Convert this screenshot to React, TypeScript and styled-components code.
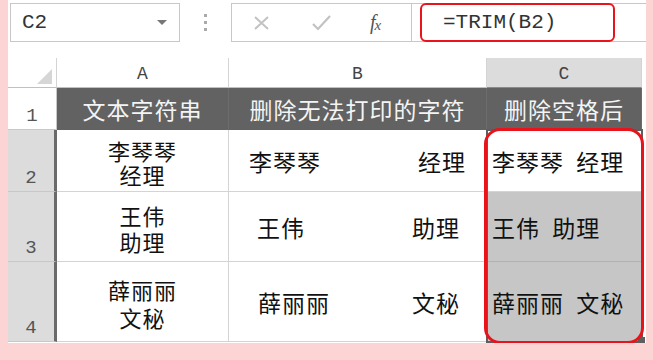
import styled, { createGlobalStyle } from 'styled-components'

const GlobalStyle = createGlobalStyle`
  html, body {
    margin: 0;
    padding: 0;
    background: #fdd4d4;
  }
  body {
    font-family: "Noto Sans CJK SC", "Noto Sans", sans-serif;
  }
`

const Frame = styled.div`
  position: relative;
  margin-left: 8px;
  width: 638px;
  height: 343px;
  background: #ffffff;
`

const Toolbar = styled.div`
  display: flex;
  align-items: flex-start;
  height: 58px;
  padding-top: 3px;
  padding-left: 2px;
  box-sizing: border-box;
`

const NameBox = styled.div`
  position: relative;
  width: 170px;
  height: 39px;
  box-sizing: border-box;
  border: 1px solid #c8c8c8;
  display: flex;
  align-items: center;
  padding-left: 11px;
  font-family: "Liberation Mono", monospace;
  font-size: 21px;
  color: #333;
`

const Caret = styled.span`
  position: absolute;
  right: 12px;
  top: 16px;
  width: 0;
  height: 0;
  border-left: 5px solid transparent;
  border-right: 5px solid transparent;
  border-top: 5px solid #777;
`

const Dots = styled.div`
  width: 51px;
  height: 39px;
  display: flex;
  flex-direction: column;
  align-items: center;
  justify-content: center;
  gap: 4px;
  span {
    width: 3px;
    height: 3px;
    background: #aaa;
  }
`

const FxGroup = styled.div`
  width: 181px;
  height: 39px;
  box-sizing: border-box;
  border: 1px solid #c8c8c8;
  display: flex;
  align-items: center;
  padding-left: 21px;
`

const IconSlot = styled.div<{ $w: number }>`
  width: ${(p) => p.$w}px;
  display: flex;
  align-items: center;
`

const Fx = styled.span`
  font-family: "Liberation Serif", serif;
  font-style: italic;
  font-size: 20px;
  color: #555;
  letter-spacing: -1px;
  sub {
    font-size: 15px;
    vertical-align: -1px;
  }
`

const FormulaInput = styled.div`
  position: relative;
  flex: 1;
  height: 39px;
  box-sizing: border-box;
  border-top: 1px solid #c8c8c8;
  border-bottom: 1px solid #c8c8c8;
  display: flex;
  align-items: center;
  padding-left: 31px;
  font-family: "Liberation Mono", monospace;
  font-size: 21px;
  color: #333;
`

const RedBox = styled.div`
  position: absolute;
  left: 8px;
  top: -1px;
  width: 195px;
  height: 39px;
  box-sizing: border-box;
  border: 2px solid #e8131b;
  border-radius: 6px;
`

const Sheet = styled.div`
  display: grid;
  grid-template-columns: 49px 172px 258px 155px 4px;
  grid-template-rows: 30px 42px 62px 70px 80px;
`

const Corner = styled.div`
  position: relative;
  border-right: 1px solid #d4d4d4;
  border-bottom: 1px solid #c0c0c0;
  &::after {
    content: '';
    position: absolute;
    right: 4px;
    bottom: 3px;
    width: 0;
    height: 0;
    border-left: 15px solid transparent;
    border-bottom: 15px solid #d6d6d6;
  }
`

const ColHead = styled.div<{ $selected?: boolean }>`
  display: flex;
  align-items: center;
  justify-content: center;
  font-family: "Liberation Mono", monospace;
  font-size: 18px;
  color: #444;
  background: ${(p) => (p.$selected ? '#dcdcdc' : '#ffffff')};
  border-right: 1px solid #d4d4d4;
  border-bottom: 1px solid ${(p) => (p.$selected ? '#8a8a8a' : '#c0c0c0')};
  padding-top: 2px;
  box-sizing: border-box;
`

const RowHead = styled.div<{ $selected?: boolean }>`
  display: flex;
  align-items: flex-end;
  justify-content: center;
  padding-bottom: 2px;
  box-sizing: border-box;
  font-family: "Liberation Mono", monospace;
  font-size: 19px;
  color: #555;
  background: ${(p) => (p.$selected ? '#dcdcdc' : '#ffffff')};
  border-bottom: 1px solid #c8c8c8;
  border-right: ${(p) => (p.$selected ? '3px solid #6a6a6a' : '1px solid #c8c8c8')};
`

const TitleCell = styled.div`
  display: flex;
  align-items: center;
  justify-content: center;
  background: #626262;
  color: #f4f4f4;
  font-size: 23px;
  letter-spacing: 1px;
  border-right: 1px solid #6c6c6c;
`

const Spacer = styled.div``

const StackCell = styled.div<{ $lh: number }>`
  display: flex;
  align-items: center;
  justify-content: center;
  text-align: center;
  white-space: pre-line;
  font-size: 22px;
  line-height: ${(p) => p.$lh}px;
  letter-spacing: 1px;
  color: #111;
  border-right: 1px solid #d4d4d4;
  border-bottom: 1px solid #d4d4d4;
  padding-top: 3px;
  box-sizing: border-box;
`

const SplitCell = styled.div<{ $left: number; $right: number }>`
  display: flex;
  align-items: center;
  justify-content: space-between;
  padding: 0 ${(p) => p.$right}px 0 ${(p) => p.$left}px;
  font-size: 23px;
  letter-spacing: 1px;
  color: #111;
  border-right: 1px solid #d4d4d4;
  border-bottom: 1px solid #d4d4d4;
  box-sizing: border-box;
`

const ResultCell = styled.div<{ $filled?: boolean }>`
  display: flex;
  align-items: center;
  padding-left: 5px;
  font-size: 23px;
  letter-spacing: 1px;
  color: #111;
  white-space: pre;
  background: ${(p) => (p.$filled ? '#c6c6c6' : '#ffffff')};
  border-bottom: 1px solid ${(p) => (p.$filled ? '#b2b2b2' : '#d4d4d4')};
  box-sizing: border-box;
`

const Selection = styled.div`
  position: absolute;
  left: 478px;
  top: 129px;
  width: 157px;
  height: 214px;
  box-sizing: border-box;
  border: 2px solid #5e5e5e;
  pointer-events: none;
`

const Handle = styled.div`
  position: absolute;
  left: 630px;
  top: 337px;
  width: 7px;
  height: 7px;
  background: #5e5e5e;
`

const RedRing = styled.div`
  position: absolute;
  left: 476px;
  top: 128px;
  width: 160px;
  height: 216px;
  box-sizing: border-box;
  border: 3px solid #e8131b;
  border-radius: 16px;
  pointer-events: none;
`

const rows = [
  { n: '2', name: '李琴琴', job: '经理', lh: 24, left: 20, right: 20, result: '李琴琴  经理', filled: false },
  { n: '3', name: '王伟', job: '助理', lh: 26, left: 28, right: 26, result: '王伟  助理', filled: true },
  { n: '4', name: '薛丽丽', job: '文秘', lh: 28, left: 29, right: 26, result: '薛丽丽  文秘', filled: true },
]

export default function App() {
  return (
    <>
      <GlobalStyle />
      <Frame>
        <Toolbar>
          <NameBox>
            C2
            <Caret />
          </NameBox>
          <Dots>
            <span />
            <span />
            <span />
          </Dots>
          <FxGroup>
            <IconSlot $w={59}>
              <svg width="17" height="14" viewBox="0 0 17 14">
                <path d="M2 1 L15 13 M15 1 L2 13" stroke="#c2c2c2" strokeWidth="2" fill="none" />
              </svg>
            </IconSlot>
            <IconSlot $w={58}>
              <svg width="19" height="16" viewBox="0 0 19 16">
                <path d="M1 9 L6 14 L18 1" stroke="#c2c2c2" strokeWidth="2.2" fill="none" />
              </svg>
            </IconSlot>
            <IconSlot $w={30}>
              <Fx>
                f<sub>x</sub>
              </Fx>
            </IconSlot>
          </FxGroup>
          <FormulaInput>
            =TRIM(B2)
            <RedBox />
          </FormulaInput>
        </Toolbar>
        <Sheet>
          <Corner />
          <ColHead>A</ColHead>
          <ColHead>B</ColHead>
          <ColHead $selected>C</ColHead>
          <Spacer />

          <RowHead>1</RowHead>
          <TitleCell>文本字符串</TitleCell>
          <TitleCell>删除无法打印的字符</TitleCell>
          <TitleCell>删除空格后</TitleCell>
          <Spacer />

          {rows.flatMap((r) => [
            <RowHead key={`h${r.n}`} $selected>
              {r.n}
            </RowHead>,
            <StackCell key={`a${r.n}`} $lh={r.lh}>
              {`${r.name}\n${r.job}`}
            </StackCell>,
            <SplitCell key={`b${r.n}`} $left={r.left} $right={r.right}>
              <span>{r.name}</span>
              <span>{r.job}</span>
            </SplitCell>,
            <ResultCell key={`c${r.n}`} $filled={r.filled}>
              {r.result}
            </ResultCell>,
            <Spacer key={`s${r.n}`} />,
          ])}
        </Sheet>
        <Selection />
        <Handle />
        <RedRing />
      </Frame>
    </>
  )
}
